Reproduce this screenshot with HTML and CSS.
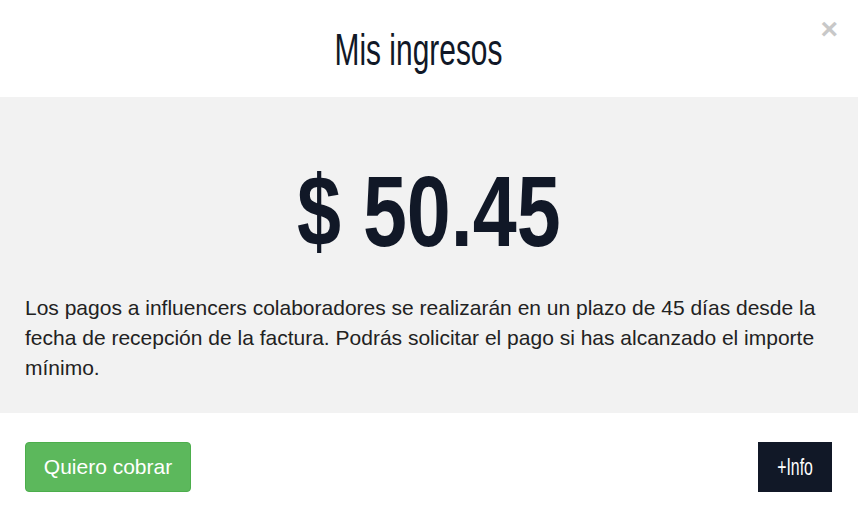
FILE: index.html
```html
<!DOCTYPE html>
<html lang="es">
<head>
<meta charset="utf-8">
<link rel="stylesheet" href="styles.css">
</head>
<body>
<div class="modal">
  <header class="modal-header">
    <h1 class="title"><span class="narrow">Mis ingresos</span></h1>
    <span class="close">&times;</span>
  </header>
  <section class="modal-body">
    <div class="amount"><span class="narrow">$ 50.45</span></div>
    <p class="desc">Los pagos a influencers colaboradores se realizarán en un plazo de 45 días desde la fecha de recepción de la factura. Podrás solicitar el pago si has alcanzado el importe mínimo.</p>
  </section>
  <footer class="modal-footer">
    <button class="btn-green">Quiero cobrar</button>
    <button class="btn-dark"><span class="narrow">+Info</span></button>
  </footer>
</div>
</body>
</html>
```
FILE: styles.css
```css
html, body { margin: 0; padding: 0; background: #fff; }
body { font-family: "Liberation Sans", Arial, sans-serif; width: 858px; height: 516px; overflow: hidden; }
.modal { display: flex; flex-direction: column; }
.narrow { display: inline-block; transform-origin: center; }
.modal-header { position: relative; height: 97px; display: flex; align-items: center; justify-content: center; padding-right: 22px; }
.title {
  margin: 0; font-family: "Liberation Sans", sans-serif;
  font-weight: 400; font-size: 44px; line-height: 1; color: #111827; padding-top: 2px;
}
.title .narrow { transform: scaleX(0.68); }
.close { position: absolute; right: 20px; top: 14px; font-size: 30px; font-weight: bold; color: #c8c8c8; line-height: 1; }
.modal-body { background: #f2f2f2; height: 316px; box-sizing: border-box; padding: 64px 25px 0; }
.amount {
  text-align: center; font-family: "Liberation Sans", sans-serif;
  font-weight: 700; font-size: 100px; line-height: 100px; color: #111827;
}
.amount .narrow { transform: scaleX(0.79); }
.desc { margin: 32px 0 0; font-size: 21px; line-height: 30px; color: #222; }
.modal-footer { display: flex; justify-content: space-between; align-items: center; padding: 29px 26px 0 25px; }
.btn-green { background: #5cb85c; border: 1px solid #4cae4c; color: #fff; font-family: "Liberation Sans", Arial, sans-serif; font-size: 21px; height: 50px; width: 166px; padding: 0; border-radius: 4px; }
.btn-dark { background: #111827; border: 0; color: #fff; font-family: "Liberation Sans", sans-serif; font-size: 24px; height: 50px; width: 74px; padding: 0; }
.btn-dark .narrow { transform: scaleX(0.66); }
```
